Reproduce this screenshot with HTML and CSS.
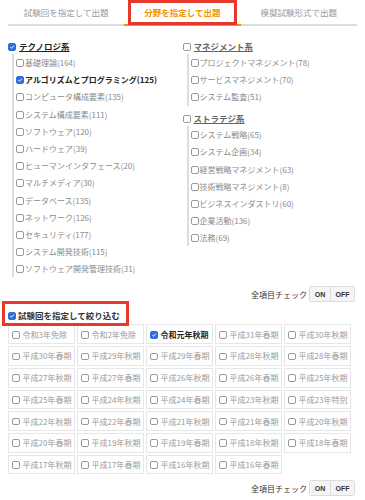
FILE: index.html
```html
<!DOCTYPE html>
<html>
	<head>
		<meta charset="utf-8">
		<title>分野を指定して出題</title>
		<link rel="stylesheet" href="styles.css">
	</head>
	<body>
		<div class="page">
			<ul class="tabs">
				<li class="tab">試験回を指定して出題</li>
				<li class="tab active">分野を指定して出題</li>
				<li class="tab">模擬試験形式で出題</li>
			</ul>

			<div class="fields">
				<div class="field_col">
					<label class="parent on"><input type="checkbox" checked><span>テクノロジ系</span></label>
					<ul class="children">
						<li><label><input type="checkbox">基礎理論(164)</label></li>
						<li class="on"><label><input type="checkbox" checked>アルゴリズムとプログラミング(125)</label></li>
						<li><label><input type="checkbox">コンピュータ構成要素(135)</label></li>
						<li><label><input type="checkbox">システム構成要素(111)</label></li>
						<li><label><input type="checkbox">ソフトウェア(120)</label></li>
						<li><label><input type="checkbox">ハードウェア(39)</label></li>
						<li><label><input type="checkbox">ヒューマンインタフェース(20)</label></li>
						<li><label><input type="checkbox">マルチメディア(30)</label></li>
						<li><label><input type="checkbox">データベース(135)</label></li>
						<li><label><input type="checkbox">ネットワーク(126)</label></li>
						<li><label><input type="checkbox">セキュリティ(177)</label></li>
						<li><label><input type="checkbox">システム開発技術(115)</label></li>
						<li><label><input type="checkbox">ソフトウェア開発管理技術(31)</label></li>
					</ul>
				</div>
				<div class="field_col">
					<label class="parent"><input type="checkbox"><span>マネジメント系</span></label>
					<ul class="children">
						<li><label><input type="checkbox">プロジェクトマネジメント(78)</label></li>
						<li><label><input type="checkbox">サービスマネジメント(70)</label></li>
						<li><label><input type="checkbox">システム監査(51)</label></li>
					</ul>
					<label class="parent second"><input type="checkbox"><span>ストラテジ系</span></label>
					<ul class="children">
						<li><label><input type="checkbox">システム戦略(65)</label></li>
						<li><label><input type="checkbox">システム企画(34)</label></li>
						<li><label><input type="checkbox">経営戦略マネジメント(63)</label></li>
						<li><label><input type="checkbox">技術戦略マネジメント(8)</label></li>
						<li><label><input type="checkbox">ビジネスインダストリ(60)</label></li>
						<li><label><input type="checkbox">企業活動(136)</label></li>
						<li><label><input type="checkbox">法務(69)</label></li>
					</ul>
				</div>
			</div>

			<div class="check_all">
				<span>全項目チェック</span>
				<div class="btns"><button type="button">ON</button><button type="button">OFF</button></div>
			</div>

			<label class="filter_head"><input type="checkbox" checked>試験回を指定して絞り込む</label>
			<div class="exam_grid">
				<label class="exam"><input type="checkbox">令和3年免除</label>
				<label class="exam"><input type="checkbox">令和2年免除</label>
				<label class="exam on"><input type="checkbox" checked>令和元年秋期</label>
				<label class="exam"><input type="checkbox">平成31年春期</label>
				<label class="exam"><input type="checkbox">平成30年秋期</label>
				<label class="exam"><input type="checkbox">平成30年春期</label>
				<label class="exam"><input type="checkbox">平成29年秋期</label>
				<label class="exam"><input type="checkbox">平成29年春期</label>
				<label class="exam"><input type="checkbox">平成28年秋期</label>
				<label class="exam"><input type="checkbox">平成28年春期</label>
				<label class="exam"><input type="checkbox">平成27年秋期</label>
				<label class="exam"><input type="checkbox">平成27年春期</label>
				<label class="exam"><input type="checkbox">平成26年秋期</label>
				<label class="exam"><input type="checkbox">平成26年春期</label>
				<label class="exam"><input type="checkbox">平成25年秋期</label>
				<label class="exam"><input type="checkbox">平成25年春期</label>
				<label class="exam"><input type="checkbox">平成24年秋期</label>
				<label class="exam"><input type="checkbox">平成24年春期</label>
				<label class="exam"><input type="checkbox">平成23年秋期</label>
				<label class="exam"><input type="checkbox">平成23年特別</label>
				<label class="exam"><input type="checkbox">平成22年秋期</label>
				<label class="exam"><input type="checkbox">平成22年春期</label>
				<label class="exam"><input type="checkbox">平成21年秋期</label>
				<label class="exam"><input type="checkbox">平成21年春期</label>
				<label class="exam"><input type="checkbox">平成20年秋期</label>
				<label class="exam"><input type="checkbox">平成20年春期</label>
				<label class="exam"><input type="checkbox">平成19年秋期</label>
				<label class="exam"><input type="checkbox">平成19年春期</label>
				<label class="exam"><input type="checkbox">平成18年秋期</label>
				<label class="exam"><input type="checkbox">平成18年春期</label>
				<label class="exam"><input type="checkbox">平成17年秋期</label>
				<label class="exam"><input type="checkbox">平成17年春期</label>
				<label class="exam"><input type="checkbox">平成16年秋期</label>
				<label class="exam"><input type="checkbox">平成16年春期</label>
			</div>

			<div class="check_all last">
				<span>全項目チェック</span>
				<div class="btns"><button type="button">ON</button><button type="button">OFF</button></div>
			</div>
		</div>
	</body>
</html>
```

FILE: styles.css
```css
body {
    margin: 0;
    background: #fff;
    color: #333;
    font-family: "Noto Sans CJK JP", "Liberation Sans", sans-serif;
}
.page {
    padding: 0 8px;
}
ul {
    margin: 0;
    padding: 0;
    list-style: none;
}
label {
    display: flex;
    align-items: center;
}

/* チェックボックス */
input[type="checkbox"] {
    appearance: none;
    -webkit-appearance: none;
    box-sizing: border-box;
    width: 8px;
    height: 8px;
    margin: 1px 1px 0 0;
    border: 1px solid #9a9a9a;
    border-radius: 2px;
    background: #fff;
    flex: none;
}
input[type="checkbox"]:checked {
    border-color: #2d6fdc;
    background: #2d6fdc url("data:image/svg+xml,%3Csvg xmlns='http://www.w3.org/2000/svg' viewBox='0 0 10 10'%3E%3Cpath d='M2.2 5.2l2 2 3.8-4.4' fill='none' stroke='%23fff' stroke-width='1.6'/%3E%3C/svg%3E") center / 100% no-repeat;
}

/* タブ */
.tabs {
    display: flex;
    border-bottom: 2px solid #ddd;
}
.tab {
    flex: 1;
    position: relative;
    text-align: center;
    font-size: 8.5px;
    line-height: 24px;
    color: #9a9a9a;
}
.tab.active {
    color: #f29300;
    font-weight: bold;
    border-bottom: 2px solid #f29300;
    margin-bottom: -2px;
}
.tab.active::after {
    content: "";
    position: absolute;
    left: 4px;
    right: 4px;
    top: 0;
    bottom: -1px;
    border: 3px solid #e6392b;
}

/* 分野 */
.fields {
    display: grid;
    grid-template-columns: 1fr 1fr;
    margin-top: 12px;
}
.parent {
    height: 16px;
    font-size: 8.5px;
    font-weight: bold;
    color: #666;
}
.parent span {
    margin-left: 2px;
    text-decoration: underline;
}
.parent.on {
    color: #222;
}
.parent.second {
    margin-top: 4.5px;
}
.children {
    margin-left: 4px;
    padding-left: 2px;
    border-left: 2px solid #ddd;
}
.children li {
    height: 17.2px;
    display: flex;
    align-items: center;
    font-size: 8px;
    color: #8a8a8a;
}
.children li.on {
    color: #222;
    font-weight: bold;
}

/* 全項目チェック */
.check_all {
    display: flex;
    justify-content: flex-end;
    align-items: center;
    gap: 2px;
    margin-top: 9px;
    padding-right: 2px;
    font-size: 8px;
    color: #333;
}
.check_all.last {
    margin-top: 6px;
}
.btns {
    display: flex;
    border: 1px solid #ddd;
    border-radius: 2px;
    overflow: hidden;
}
.btns button {
    width: 20px;
    height: 14px;
    padding: 0;
    border: 0;
    background: #f5f5f5;
    color: #333;
    font: bold 7px "Liberation Sans", sans-serif;
}
.btns button + button {
    width: 24px;
    border-left: 1px solid #ddd;
}

/* 試験回 */
.filter_head {
    position: relative;
    height: 16px;
    margin-top: 5px;
    font-size: 8.5px;
    font-weight: bold;
    color: #333;
}
.filter_head input {
    margin-right: 2px;
}
.filter_head::after {
    content: "";
    position: absolute;
    left: -6px;
    top: -6px;
    width: 127px;
    height: 25px;
    box-sizing: border-box;
    border: 3px solid #e6392b;
}
.exam_grid {
    display: grid;
    grid-template-columns: repeat(5, 67px);
    grid-auto-rows: 19.7px;
    gap: 2px;
    margin-top: 1px;
}
.exam {
    box-sizing: border-box;
    padding-left: 3px;
    border: 1px solid #e6e6e6;
    font-size: 8px;
    color: #9a9a9a;
}
.exam input {
    width: 7.5px;
    height: 7.5px;
    margin-right: 3px;
}
.exam.on {
    color: #222;
    font-weight: bold;
}
```
